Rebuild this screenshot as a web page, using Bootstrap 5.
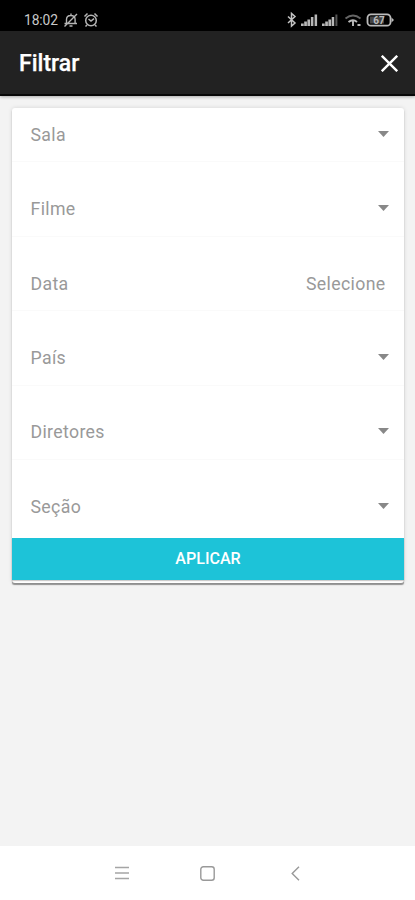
<!DOCTYPE html>
<html lang="pt-BR">
<head>
<meta charset="utf-8">
<meta name="viewport" content="width=device-width, initial-scale=1">
<title>Filtrar</title>
<link href="https://cdn.jsdelivr.net/npm/bootstrap@5.3.0/dist/css/bootstrap.min.css" rel="stylesheet">
<style>
body{font-family:Roboto,sans-serif;background:#f3f3f3;height:900px;overflow:hidden}
svg{display:block;flex:none}
.status-bar{height:31px;background:#000;color:#c9c9c9;padding:9px 21px 0 24px;font-size:14px;line-height:22px}
.clock{width:34px;font-size:13.8px;letter-spacing:-.1px;white-space:nowrap}
.app-bar{height:65px;background:#222;border-bottom:2px solid #080808;padding:2px 17px 0 19px;box-shadow:0 1px 3px rgba(0,0,0,.3)}
.app-title{font-size:23px;font-weight:500;line-height:60px;letter-spacing:0;color:#fff;-webkit-text-stroke:.25px #fff}
.filter-card{margin:12px 11px 0 12px;height:475px;border:0;border-radius:3px;box-shadow:0 2px 1px -.5px rgba(0,0,0,.38),0 0 4px rgba(0,0,0,.13)}
.filters{gap:20px;height:430px}
.filter-row{height:54.4px;padding:1px 18.5px 0;font-size:17.7px;letter-spacing:.35px;color:#999;border-bottom:1px solid #fafafa;background:none}
.filter-row.last{border-color:transparent}
.filter-row svg{margin-right:-3px;margin-top:-3px}
.apply{height:42px;background:#1dc3d8!important;color:#fff!important;font-size:16.1px;font-weight:500;line-height:42px;padding:0;border:0;border-radius:0;box-shadow:0 1px 1px rgba(0,0,0,.2)}
.nav-keys{height:54px;background:#fff;padding:0 115px}
.nav-keys svg:nth-child(2){margin-right:5px}
</style>
</head>
<body class="d-flex flex-column">
<div class="status-bar d-flex align-items-start justify-content-between">
  <div class="d-flex align-items-center">
    <span class="clock">18:02</span>
    <svg class="ms-1" width="18" height="22" viewBox="0 0 18 22" fill="none" stroke="#b5b5b5" stroke-width="1.4"><path d="M2.500 14.500h12.500M4.500 14v-3.500q0-4 4.300-4t4.300 4V14M7.500 17h3M9 4.500V6M2.500 17.500 15 5"/></svg>
    <svg width="20" height="22" viewBox="0 0 20 22" fill="none" stroke="#b5b5b5" stroke-width="1.5"><circle cx="11" cy="11.500" r="5.300"/><path d="m8.500 10 2.500 2 3-2.300M4.500 7.500l3-3M17.500 7.500l-3-3M7 16l-1.500 1.500M15 16l1.500 1.500"/></svg>
  </div>
  <svg width="108" height="22" viewBox="286 9 108 22">
    <path d="M288 16.500 295 23l-3.500 3V13.500l3.500 3-7 6.500" fill="none" stroke="#c4c4c4" stroke-width="1.500"/>
    <g fill="#b8b8b8"><path d="M301 23.500h2.700V26H301zM304.200 21.500h2.700V26h-2.700zM307.400 19.500h2.700V26h-2.700zM310.900 17h2.500v9h-2.500zM314.600 14.500h2.500V26h-2.500z"/><path d="M322 23.500h2.700V26H322zM325.200 21.500h2.700V26h-2.700zM328.400 19.500h2.700V26h-2.700zM331.700 17h2.500v9h-2.500z"/><path d="M335.400 14.500h2V26h-2z" fill="#555"/></g>
    <path d="M345.500 18.500q7.500-6 15 0" fill="none" stroke="#666" stroke-width="1.800"/>
    <path d="M348.500 22q4.500-3.500 8.500 0M353 21v5M357.500 25h3" fill="none" stroke="#bbb" stroke-width="1.900"/>
    <rect x="367.500" y="14.300" width="23" height="11.400" rx="3.500" fill="none" stroke="#bbb" stroke-width="1.800"/>
    <path d="M391.500 17.500 394 20l-2.500 2.500z" fill="#bbb"/>
    <rect x="370" y="16.500" width="14" height="7" fill="#444"/>
    <text x="379" y="23.500" text-anchor="middle" font-family="Roboto,sans-serif" font-size="10" font-weight="700" fill="#bbb">67</text>
  </svg>
</div>
<header class="app-bar d-flex align-items-center justify-content-between">
  <h1 class="app-title m-0">Filtrar</h1>
  <svg width="17" height="17" viewBox="0 0 17 17" stroke="#fff" stroke-width="2.400"><path d="m.8.800 15.400 15.400M16.200.8.800 16.200"/></svg>
</header>
<main class="flex-grow-1">
  <div class="card filter-card">
    <div class="filters d-flex flex-column">
      <div class="filter-row d-flex align-items-center justify-content-between"><span>Sala</span><svg width="11" height="6" viewBox="0 0 11 6" fill="#888"><path d="M0 0h11L5.500 6z"/></svg></div>
      <div class="filter-row d-flex align-items-center justify-content-between"><span>Filme</span><svg width="11" height="6" viewBox="0 0 11 6" fill="#888"><path d="M0 0h11L5.500 6z"/></svg></div>
      <div class="filter-row d-flex align-items-center justify-content-between"><span>Data</span><span>Selecione</span></div>
      <div class="filter-row d-flex align-items-center justify-content-between"><span>País</span><svg width="11" height="6" viewBox="0 0 11 6" fill="#888"><path d="M0 0h11L5.500 6z"/></svg></div>
      <div class="filter-row d-flex align-items-center justify-content-between"><span>Diretores</span><svg width="11" height="6" viewBox="0 0 11 6" fill="#888"><path d="M0 0h11L5.500 6z"/></svg></div>
      <div class="filter-row last d-flex align-items-center justify-content-between"><span>Seção</span><svg width="11" height="6" viewBox="0 0 11 6" fill="#888"><path d="M0 0h11L5.500 6z"/></svg></div>
    </div>
    <button type="button" class="btn apply w-100">APLICAR</button>
  </div>
</main>
<nav class="nav-keys d-flex align-items-center justify-content-between">
  <svg width="14" height="14" viewBox="0 0 14 14" stroke="#a5a5a5" stroke-width="1.400"><path d="M0 1.500h14M0 7h14M0 12.500h14"/></svg>
  <svg width="15" height="15" viewBox="0 0 15 15" fill="none" stroke="#999" stroke-width="1.400"><rect x=".8" y=".8" width="13.400" height="13.400" rx="2.500"/></svg>
  <svg width="9" height="15" viewBox="0 0 9 15" fill="none" stroke="#999" stroke-width="1.400"><path d="M8 .8 1.200 7.500 8 14.200"/></svg>
</nav>
<script src="https://cdn.jsdelivr.net/npm/bootstrap@5.3.0/dist/js/bootstrap.bundle.min.js"></script>
</body>
</html>
